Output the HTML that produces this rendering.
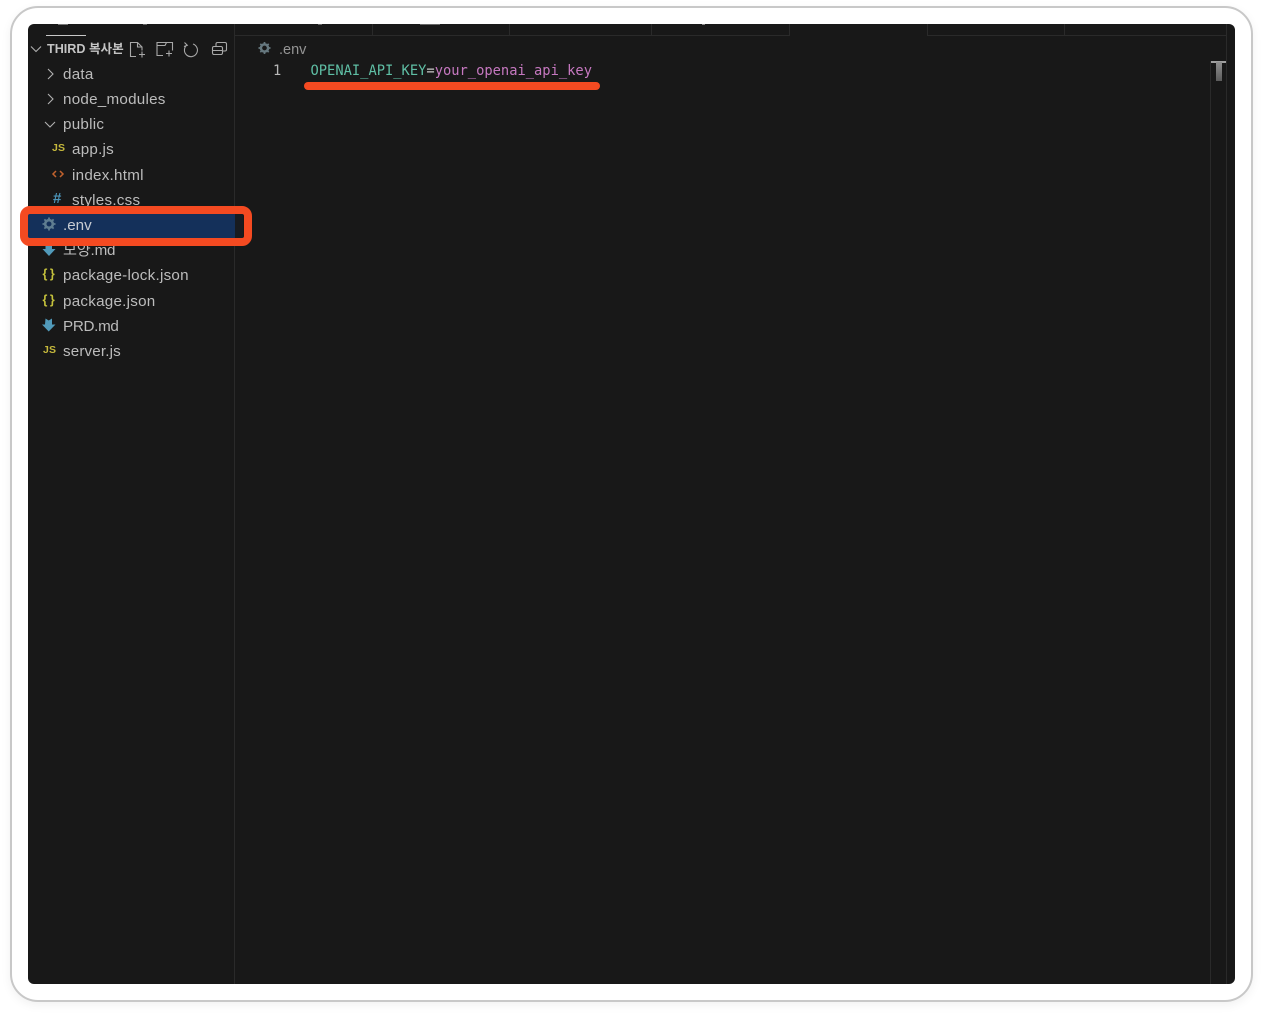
<!DOCTYPE html>
<html><head><meta charset="utf-8">
<style>
html,body{margin:0;padding:0;background:#fff;width:1263px;height:1016px;overflow:hidden}
*{box-sizing:border-box}
body{font-family:"Liberation Sans","Noto Sans CJK KR",sans-serif;position:relative}
.abs,.card,.win,.t,.ic{position:absolute}
.card{left:10px;top:6px;width:1243px;height:996px;border:2px solid #c8c8c8;border-radius:28px;background:#fff;box-shadow:0 3px 10px rgba(0,0,0,.06)}
.win{left:28px;top:24px;width:1207px;height:960px;background:#181818;border-radius:6px;overflow:hidden}
.t{font-size:15.2px;letter-spacing:.25px;color:#bcbcbc;line-height:20px;white-space:nowrap;filter:blur(.35px)}
.m{font-family:"DejaVu Sans Mono","Liberation Mono",monospace;font-size:13.75px;letter-spacing:0}
.l{position:absolute;background:#2a2a2a}
svg{position:absolute;overflow:visible}
.soft{filter:blur(.3px)}
</style></head><body>
<div class="card"></div>
<div class="win">
  <div class="l" style="left:206px;top:0;width:1px;height:960px"></div>
  <div class="l" style="left:207px;top:11px;width:554px;height:1px"></div>
  <div class="l" style="left:899px;top:11px;width:299px;height:1px"></div>
  <div class="l" style="left:344px;top:0;width:1px;height:11px"></div>
  <div class="l" style="left:481px;top:0;width:1px;height:11px"></div>
  <div class="l" style="left:623px;top:0;width:1px;height:11px"></div>
  <div class="l" style="left:761px;top:0;width:1px;height:12px"></div>
  <div class="l" style="left:899px;top:0;width:1px;height:12px"></div>
  <div class="l" style="left:1036px;top:0;width:1px;height:11px"></div>
  <div class="l" style="left:1182px;top:37px;width:1px;height:923px"></div>
  <div class="l" style="left:1198px;top:0;width:1px;height:960px"></div>
  <div class="abs" style="left:18px;top:11px;width:40px;height:1px;background:#c8c8c8"></div>
  <div class="abs" style="left:30px;top:0;width:10px;height:1px;background:#777"></div>
  <div class="abs" style="left:115px;top:0;width:4px;height:1px;background:#666"></div>
  <div class="abs" style="left:290px;top:0;width:4px;height:1px;background:#666"></div>
  <div class="abs" style="left:392px;top:0;width:20px;height:1px;background:#666"></div>
  <div class="abs" style="left:674px;top:0;width:3px;height:1px;background:#888"></div>
  <div class="abs" style="left:0;top:190px;width:207px;height:24px;background:#14305a"></div>
  <div class="abs" style="left:207px;top:190px;width:8px;height:24px;background:#181b20"></div>
  <div class="abs soft" style="left:1183px;top:37px;width:15px;height:2px;background:#a0a0a0"></div>
  <div class="abs soft" style="left:1188px;top:38px;width:6px;height:19px;background:linear-gradient(#8f8f8f,#5c5c5c)"></div>
</div>

<div class="t" style="left:47px;top:39px;font-size:12.6px;letter-spacing:0;font-weight:700;color:#c4c4c4">THIRD 복사본</div>
<div class="t" style="left:63px;top:65px">data</div>
<div class="t" style="left:63px;top:90px">node_modules</div>
<div class="t" style="left:63px;top:115px">public</div>
<div class="t" style="left:72px;top:140px">app.js</div>
<div class="t" style="left:72px;top:166px">index.html</div>
<div class="t" style="left:72px;top:191px">styles.css</div>
<div class="t" style="left:63px;top:216px;color:#c8ccd2;letter-spacing:0">.env</div>
<div class="t" style="left:63px;top:241px;letter-spacing:-.2px">모양.md</div>
<div class="t" style="left:63px;top:266px">package-lock.json</div>
<div class="t" style="left:63px;top:292px">package.json</div>
<div class="t" style="left:63px;top:317px;letter-spacing:-.3px">PRD.md</div>
<div class="t" style="left:63px;top:342px;letter-spacing:.15px">server.js</div>

<div class="t" style="left:52px;top:139px;font-size:10.500px;letter-spacing:.2px;font-weight:700;color:#c5b83c;line-height:18px">JS</div>
<div class="t" style="left:43px;top:341px;font-size:10.500px;letter-spacing:.2px;font-weight:700;color:#c5b83c;line-height:18px">JS</div>
<div class="t" style="left:53px;top:190px;font-size:15px;letter-spacing:0;font-weight:700;color:#4b94b8;line-height:18px">#</div>
<div class="t" style="left:42.500px;top:265px;font-size:12.500px;font-weight:700;color:#c5c23c;line-height:18px;letter-spacing:2.500px">{}</div>
<div class="t" style="left:42.500px;top:291px;font-size:12.500px;font-weight:700;color:#c5c23c;line-height:18px;letter-spacing:2.500px">{}</div>

<svg class="soft" width="1263" height="1016" style="left:0;top:0" fill="none">
  <!-- chevrons -->
  <g stroke="#b0b0b0" stroke-width="1.1">
    <path d="M31 46.500l5 5 5-5"/>
    <path d="M48 69l5 5-5 5"/>
    <path d="M48 94l5 5-5 5"/>
    <path d="M45 122l5 5 5-5"/>
  </g>
  <!-- toolbar icons -->
  <g stroke="#a8a8a8" stroke-width="1.1">
    <path d="M136 56.500h-5.500v-14h7l4.500 4.500v3.500M137.500 42.500v4.500h4.500"/>
    <path d="M142 51.500v6M139 54.500h6"/>
    <path d="M163 55.500h-6v-13h15.500v8M157 45.500h8l1.500-3"/>
    <path d="M169 50.500v6M166 53.500h6"/>
    <path d="M187 45a6.500 6.500 0 1 0 6-1M184.500 42.500l2.800 2.800-3.300 1.200"/>
    <path d="M212.500 48a1.500 1.500 0 0 1 1.500-1.500h7a1.500 1.500 0 0 1 1.500 1.500v5a1.500 1.500 0 0 1-1.500 1.500h-7a1.500 1.500 0 0 1-1.500-1.500zM212.500 50.500h10M216 46.500V44a1.500 1.500 0 0 1 1.500-1.500h7.500a1.500 1.500 0 0 1 1.500 1.500v5.500a1.500 1.500 0 0 1-1.500 1.500h-2.500"/>
  </g>
  <!-- html icon -->
  <path d="M56 171l-3 3 3 3M60 171l3 3-3 3" stroke="#c2622d" stroke-width="1.500"/>
  <!-- gears -->
  <g stroke="#5f7d90">
    <circle cx="49" cy="224" r="3.800" stroke-width="2.600"/>
    <path d="M49 217.500v2.500M49 228v2.500M42.500 224H45M53 224h2.500M44.400 219.400l1.800 1.800M51.800 226.800l1.800 1.800M44.400 228.600l1.800-1.800M51.800 221.200l1.800-1.800" stroke-width="1.800"/>
  </g>
  <g stroke="#66787f">
    <circle cx="264.500" cy="48" r="3.600" stroke-width="2.500"/>
    <path d="M264.500 42v2.500M264.500 51.500V54M258.500 48H261M268 48h2.500M260.300 43.800l1.700 1.700M267 50.500l1.700 1.700M260.300 52.200l1.700-1.700M267 45.500l1.700-1.700" stroke-width="1.700"/>
  </g>
  <!-- md arrows -->
  <path d="M45.500 243h6.500v6h3.500l-6.500 7-6.500-7h3z" fill="#519aba"/>
  <path d="M45.500 318.500l3.200 2 3.300-2v6h3.500l-6.800 7-6.700-7h3z" fill="#519aba"/>
</svg>

<div class="abs" style="left:20px;top:206px;width:232px;height:40px;border:8px solid #f44a21;border-radius:10px"></div>
<div class="abs" style="left:304px;top:82px;width:296px;height:8px;border-radius:4px;background:#f44a21"></div>

<div class="t" style="left:279px;top:40px;font-size:14.500px;letter-spacing:0;color:#949494">.env</div>
<div class="t m" style="left:273px;top:61px;color:#b8b8b8">1</div>
<div class="t m" style="left:310.500px;top:61px;color:#5fbfa5"><span>OPENAI_API_KEY</span><span style="color:#c8c8c8">=</span><span style="color:#c678c0">your_openai_api_key</span></div>
</body></html>
